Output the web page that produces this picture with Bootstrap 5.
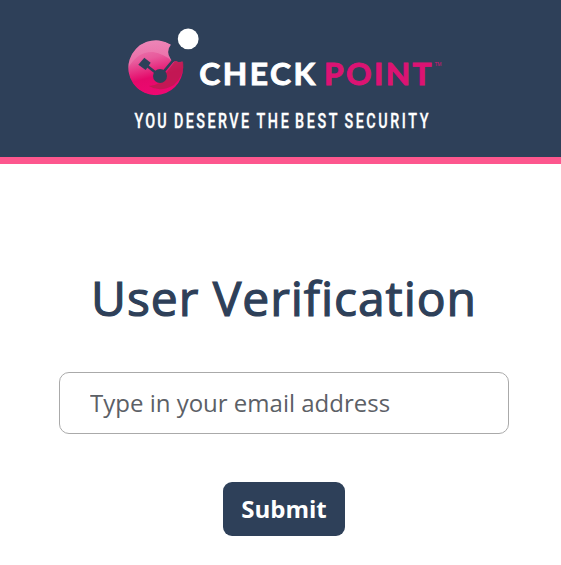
<!DOCTYPE html>
<html lang="en">
<head>
<meta charset="utf-8">
<meta name="viewport" content="width=device-width, initial-scale=1">
<title>User Verification</title>
<link href="https://cdn.jsdelivr.net/npm/bootstrap@5.3.0/dist/css/bootstrap.min.css" rel="stylesheet">
<style>
  body { font-family: "Open Sans", "Noto Sans", sans-serif; min-height: 565px; overflow: hidden; }
  .brand-bar { height: 164px; background: #2e4059; border-bottom: 7px solid #fd578e; padding-top: 20px; }
  .verify-form { width: 450px; margin-left: 59px; padding-top: 101px; }
  .verify-title { color: #2e4059; font-size: 48px; font-weight: 500; line-height: 66px; letter-spacing: .95px; white-space: nowrap; -webkit-text-stroke: 1.2px #2e4059; }
  .email-input { height: 62px; margin-top: 41px; padding: 0 30px 2px; border: 1px solid #aaa; border-radius: 10px; font-size: 24px; }
  .email-input::placeholder { color: #5c6066; opacity: 1; }
  .btn-submit { width: 122px; height: 54px; margin-top: 48px; padding: 0; border: 0; border-radius: 9px; background: #2e4059; color: #fff; font-size: 24px; font-weight: 700; }
  .btn-submit:hover { background: #3b506d; color: #fff; }
  .wordmark { font-family: Lato, sans-serif; font-weight: 700; font-size: 30px; stroke-width: .9; }
  .tagline { font-family: Roboto, sans-serif; font-weight: 500; font-size: 20.5px; stroke: #fff; stroke-width: .35; }
</style>
</head>
<body class="bg-white">
<header class="brand-bar">
  <svg class="d-block" width="561" height="120" viewBox="0 20 561 120" role="img" aria-label="Check Point">
    <defs>
      <linearGradient id="ball" x1="0.25" y1="0" x2="0.5" y2="1">
        <stop offset="0" stop-color="#ec82b5"/><stop offset=".35" stop-color="#e85a9c"/>
        <stop offset=".68" stop-color="#e5096a"/><stop offset="1" stop-color="#ee0872"/>
      </linearGradient>
      <linearGradient id="gloss" x1="0" y1="0" x2="1" y2="1">
        <stop offset="0" stop-color="#fff" stop-opacity="0"/><stop offset="1" stop-color="#fff" stop-opacity=".25"/>
      </linearGradient>
      <clipPath id="bitten"><path d="M171 44.6Q165.500 51.500 170.500 58.800L172.500 62L176 61L178.500 62.200L183 61.600A27.700 27.700 0 1 1 171 44.600Z"/></clipPath>
    </defs>
    <g clip-path="url(#bitten)">
      <circle cx="155.400" cy="67.500" r="27.700" fill="url(#ball)"/>
      <path d="M128 68Q138 51 153 52Q164 54 172 61L176 36H128Z" fill="url(#gloss)"/>
      <path d="M184 61H175L164 76Q162 85 149 86Q160 93 174 85Q184 76 184 61Z" fill="#b71c4c" opacity=".75"/>
    </g>
    <path d="M146 65L160 76L173 60.500" fill="none" stroke="#2e4059" stroke-width="2.700"/>
    <path d="M144.300 57.700L150.700 62.700L145.700 70L138.300 64.700Z" fill="#2e4059"/>
    <circle cx="160" cy="76" r="7" fill="#2e4059"/>
    <circle cx="188.200" cy="38.900" r="10.400" fill="#fff"/>
    <g class="wordmark" transform="scale(1.06 1)">
      <text x="188" y="84.700" fill="#fff" stroke="#fff" textLength="109.500">CHECK</text>
      <text x="305.700" y="84.700" fill="#dc1373" stroke="#dc1373" textLength="101.500">POINT</text>
    </g>
    <text x="434.500" y="66" fill="#dc1373" font-size="5" font-family="Liberation Sans, sans-serif" textLength="7">TM</text>
    <g class="tagline" transform="scale(.7 1)" fill="#fff">
      <text x="192" y="127.800" textLength="46">YOU</text>
      <text x="248.500" y="127.800" textLength="107.500">DESERVE</text>
      <text x="366.500" y="127.800" textLength="46">THE</text>
      <text x="421.500" y="127.800" textLength="60.500">BEST</text>
      <text x="492" y="127.800" textLength="120">SECURITY</text>
    </g>
  </svg>
</header>
<main>
  <form class="verify-form d-flex flex-column align-items-center">
    <h1 class="verify-title mb-0">User Verification</h1>
    <input class="email-input form-control" type="email" placeholder="Type in your email address" aria-label="Email address">
    <button class="btn btn-submit" type="button">Submit</button>
  </form>
</main>
<script src="https://cdn.jsdelivr.net/npm/bootstrap@5.3.0/dist/js/bootstrap.bundle.min.js"></script>
</body>
</html>
